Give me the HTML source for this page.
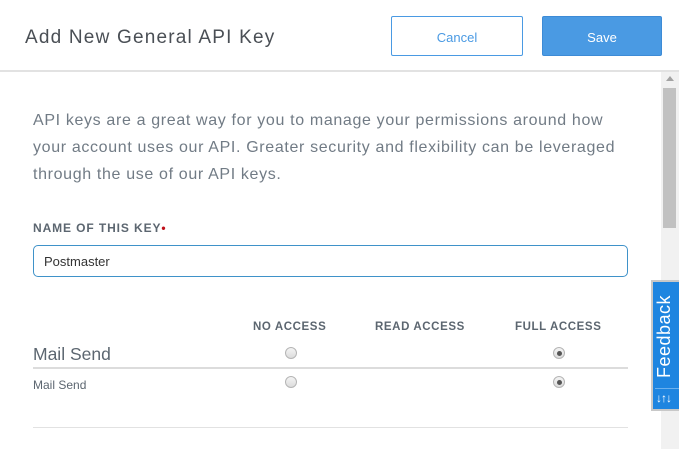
<!DOCTYPE html>
<html><head><meta charset="utf-8"><style>
*{margin:0;padding:0;box-sizing:border-box}
body{width:679px;height:449px;overflow:hidden;background:#fff;font-family:"Liberation Sans",sans-serif;position:relative}
.hdr{position:absolute;left:0;top:0;width:679px;height:72px;border-bottom:2px solid #e2e2e2;background:#fff}
.title{position:absolute;left:25px;top:27px;font-size:19px;color:#4a4f55;letter-spacing:1.2px;font-weight:300}
.btn{position:absolute;top:16px;height:40px;border-radius:2px;font-size:13px;text-align:center;line-height:42px}
.cancel{left:391px;width:132px;border:1px solid #4a9ae3;color:#4a9ae3;background:#fff}
.save{left:542px;width:120px;background:#4a9ae3;border:1px solid #3d8bd6;color:#fff}
.sb{position:absolute;left:661px;top:72px;width:18px;height:377px;background:#f1f1f1}
.thumb{position:absolute;left:663px;top:88px;width:13px;height:140px;background:#c1c1c1}
.arr{position:absolute;left:666px;top:76px;width:0;height:0;border-left:4px solid transparent;border-right:4px solid transparent;border-bottom:5px solid #a3a3a3}
.p{position:absolute;left:33px;top:107px;font-size:16px;line-height:27px;color:#717b85;white-space:nowrap;letter-spacing:0.65px}
.lbl{position:absolute;left:33px;top:221px;font-size:12px;font-weight:bold;color:#5c6670;letter-spacing:0.9px}
.lbl span{color:#c0101a}
.inp{position:absolute;left:33px;top:245px;width:595px;height:32px;border:1px solid #3f92c9;border-radius:5px;font-size:13px;color:#333;padding-left:10px;line-height:32px}
.ch{position:absolute;top:321px;font-size:11.5px;font-weight:bold;color:#5c6670;letter-spacing:0.6px}
.row1{position:absolute;left:33px;top:344px;font-size:17.5px;color:#5c6670}
.row2{position:absolute;left:33px;top:378px;font-size:12px;color:#5c6670}
.hr1{position:absolute;left:33px;top:367px;width:595px;height:2px;background:#dcdcdc}
.hr2{position:absolute;left:33px;top:427px;width:595px;height:1px;background:#e2e2e2}
.r{position:absolute;width:12px;height:12px;border-radius:50%;border:1px solid #b5b5b5;background:linear-gradient(#f4f4f4,#dcdcdc)}
.r.on::after{content:"";position:absolute;left:2.5px;top:2.5px;width:5px;height:5px;border-radius:50%;background:#555}
.fb{position:absolute;left:651px;top:280px;width:28px;height:131px;background:#c8c8c8}
.fbi{position:absolute;left:653px;top:282px;width:26px;height:127px;background:#1e85e0}
.fbt{position:absolute;left:655px;top:388px;width:24px;height:1px;background:#6ab0ee}
.fbtext{position:absolute;left:654px;top:378px;transform-origin:0 0;transform:rotate(-90deg);color:#fff;font-size:18px;white-space:nowrap;letter-spacing:0.5px}
.fbic{position:absolute;left:656px;top:391px;color:#fff;font-size:12px;font-weight:bold;letter-spacing:-1px}
</style></head><body>
<div class="hdr"><div class="title">Add New General API Key</div>
<div class="btn cancel">Cancel</div><div class="btn save">Save</div></div>
<div class="sb"></div><div class="thumb"></div><div class="arr"></div>
<div class="p">API keys are a great way for you to manage your permissions around how<br>your account uses our API. Greater security and flexibility can be leveraged<br>through the use of our API keys.</div>
<div class="lbl">NAME OF THIS KEY<span>•</span></div>
<div class="inp">Postmaster</div>
<div class="ch" style="left:253px">NO ACCESS</div>
<div class="ch" style="left:375px">READ ACCESS</div>
<div class="ch" style="left:515px">FULL ACCESS</div>
<div class="row1">Mail Send</div>
<div class="hr1"></div>
<div class="row2">Mail Send</div>
<div class="hr2"></div>
<div class="r" style="left:285px;top:347px"></div>
<div class="r on" style="left:553px;top:347px"></div>
<div class="r" style="left:285px;top:376px"></div>
<div class="r on" style="left:553px;top:376px"></div>
<div class="fb"></div><div class="fbi"></div><div class="fbt"></div>
<div class="fbtext">Feedback</div>
<div class="fbic">↓↑↓</div>
</body></html>
